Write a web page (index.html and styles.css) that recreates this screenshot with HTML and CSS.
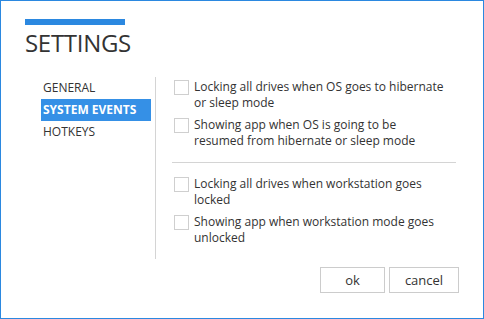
FILE: index.html
```html
<!DOCTYPE html>
<html>
<head>
<meta charset="utf-8">
<link rel="stylesheet" href="styles.css">
</head>
<body>
<div class="window">
  <div class="accent"></div>
  <h1 class="title">SETTINGS</h1>
  <div class="main">
    <ul class="nav">
      <li class="nav-item">GENERAL</li>
      <li class="nav-item active">SYSTEM EVENTS</li>
      <li class="nav-item">HOTKEYS</li>
    </ul>
    <div class="divider"></div>
    <div class="content">
      <div class="group">
        <label class="option"><span class="box"></span><span class="text">Locking all drives when OS goes to hibernate or sleep mode</span></label>
        <label class="option"><span class="box"></span><span class="text">Showing app when OS is going to be<br>resumed from hibernate or sleep mode</span></label>
      </div>
      <div class="sep"></div>
      <div class="group">
        <label class="option"><span class="box"></span><span class="text">Locking all drives when workstation goes locked</span></label>
        <label class="option"><span class="box"></span><span class="text">Showing app when workstation mode goes unlocked</span></label>
      </div>
    </div>
  </div>
  <div class="actions">
    <button class="btn btn-ok">ok</button>
    <button class="btn btn-cancel">cancel</button>
  </div>
</div>
</body>
</html>
```
FILE: styles.css
```css
html, body {
  margin: 0;
  padding: 0;
  background: #ffffff;
}
.window {
  box-sizing: border-box;
  width: 484px;
  height: 319px;
  border: 1px solid #2b88e0;
  background: #ffffff;
  padding: 18px 24px 0 24px;
  font-family: "Open Sans", "Noto Sans", sans-serif;
  color: #3a3a3a;
  display: flex;
  flex-direction: column;
}
.accent {
  width: 100px;
  height: 6px;
  background: #2b88e0;
}
.title {
  margin: 2px 0 0 0;
  font-size: 24px;
  font-weight: 400;
  line-height: 32px;
  color: #333333;
  letter-spacing: -0.3px;
}
.main {
  display: flex;
  margin-top: 18px;
  height: 182px;
}
.nav {
  list-style: none;
  margin: 0 0 0 16px;
  padding: 0;
  width: 110px;
}
.nav-item {
  height: 22px;
  line-height: 22px;
  padding-left: 2px;
  font-size: 12px;
  color: #333333;
}
.nav-item.active {
  background: #3590e6;
  color: #ffffff;
  font-weight: 700;
}
.divider {
  width: 1px;
  background: #d4d4d4;
  margin-left: 4px;
}
.content {
  margin-left: 16px;
  width: 284px;
  padding-top: 2px;
}
.group {
  display: flex;
  flex-direction: column;
  gap: 6px;
}
.option {
  display: flex;
  align-items: flex-start;
  font-size: 12px;
  line-height: 16px;
  color: #333333;
}
.box {
  flex: none;
  box-sizing: border-box;
  width: 15px;
  height: 15px;
  border: 1px solid #cfcfcf;
  background: #ffffff;
  margin: 1px 5px 0 2px;
}
.text {
  width: 256px;
}
.sep {
  height: 1px;
  background: #d4d4d4;
  margin: 13px 0 13px 0;
}
.actions {
  display: flex;
  justify-content: flex-end;
  gap: 4px;
  margin-top: 8px;
}
.btn {
  box-sizing: border-box;
  height: 26px;
  border: 1px solid #cccccc;
  background: #ffffff;
  font-family: "Open Sans", "Noto Sans", sans-serif;
  font-size: 13px;
  color: #333333;
  padding: 0;
}
.btn-ok { width: 65px; }
.btn-cancel { width: 70px; }
```
